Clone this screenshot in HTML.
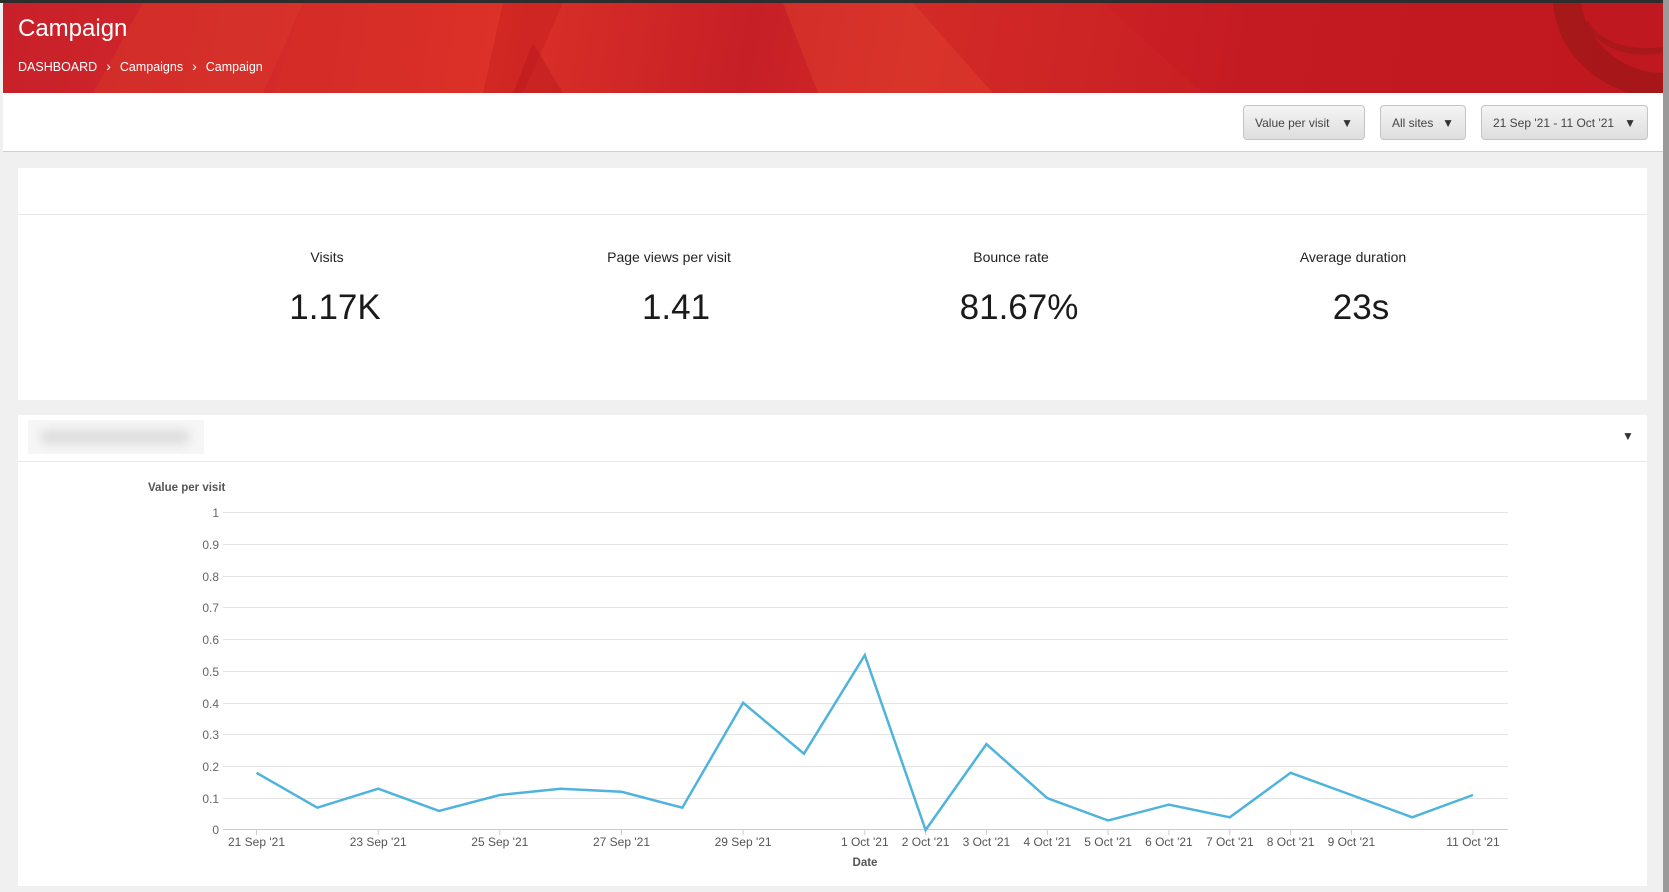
<!DOCTYPE html>
<html><head><meta charset="utf-8">
<style>
*{box-sizing:border-box;margin:0;padding:0}
html,body{width:1669px;height:892px;overflow:hidden;background:#f0f0f0;font-family:"Liberation Sans",sans-serif;position:relative}
.topbar{position:absolute;left:0;top:0;width:1669px;height:3px;background:#2d2d2d}
.lefte{position:absolute;left:0;top:0;width:3px;height:892px;background:#8a8a8a}
.scroll{position:absolute;left:1663px;top:0;width:6px;height:892px;background:#9a9a9a}
.header{position:absolute;left:3px;top:3px;width:1660px;height:90px;background:linear-gradient(100deg,#c8202a 0%,#dc3128 30%,#c61f26 45%,#d42a27 55%,#c41a22 75%,#c01820 100%);overflow:hidden}
.title{position:absolute;left:15px;top:12px;color:#fff;font-size:24px}
.bc{position:absolute;left:15px;top:55px;color:#fff;font-size:12.5px}
.bc span{margin:0 9px;font-size:14px}
.toolbar{position:absolute;left:3px;top:93px;width:1660px;height:59px;background:#fff;border-bottom:1px solid #d0d0d0}
.btn{position:absolute;top:12px;height:35px;border:1px solid #c4c4c4;border-radius:4px;background:linear-gradient(#f4f4f4,#dedede);color:#444;font-size:12px;line-height:35px;padding-left:11px}
.btn i{position:absolute;right:11px;top:0;font-style:normal;font-size:12px;color:#333}
.card{position:absolute;left:18px;width:1629px;background:#fff}
.lab{position:absolute;top:249px;font-size:14px;color:#222;transform:translateX(-50%);white-space:nowrap}
.val{position:absolute;top:288px;font-size:35px;color:#1a1a1a;transform:translateX(-50%);white-space:nowrap}
</style></head><body>
<div class="topbar"></div>
<div class="header">
<svg width="1660" height="90" style="position:absolute;left:0;top:0">
<polygon points="140,0 300,0 260,90 90,90" fill="#e0402f" opacity=".35"/>
<polygon points="300,0 420,0 400,90 270,90" fill="#d63028" opacity=".4"/>
<polygon points="500,0 560,0 520,90 480,90" fill="#b8141c" opacity=".3"/>
<polygon points="530,40 560,90 510,90" fill="#b01018" opacity=".35"/>
<polygon points="780,0 910,0 990,90 815,90" fill="#e0402f" opacity=".45"/>
<polygon points="910,0 1100,0 1200,90 990,90" fill="#d02a28" opacity=".25"/>
<path d="M1550 0 C1555 60 1610 95 1660 95 L1660 70 C1625 70 1585 45 1578 0Z" fill="#a01818" opacity=".8"/>
<path d="M1580 20 C1600 50 1630 55 1660 50 L1660 44 C1630 48 1600 42 1585 18Z" fill="#a01818" opacity=".7"/>
</svg>
<div class="title">Campaign</div>
<div class="bc">DASHBOARD<span>›</span>Campaigns<span>›</span>Campaign</div>
</div>
<div class="scroll"></div>
<div class="toolbar">
<div class="btn" style="left:1240px;width:122px">Value per visit<i>▼</i></div>
<div class="btn" style="left:1377px;width:86px">All sites<i>▼</i></div>
<div class="btn" style="left:1478px;width:167px">21 Sep '21 - 11 Oct '21<i>▼</i></div>
</div>
<div class="card" style="top:168px;height:232px"><div style="position:absolute;left:0;top:46px;width:100%;height:1px;background:#e8e8e8"></div></div>
<div class="lab" style="left:327px">Visits</div>
<div class="val" style="left:335px">1.17K</div>
<div class="lab" style="left:669px">Page views per visit</div>
<div class="val" style="left:676px">1.41</div>
<div class="lab" style="left:1011px">Bounce rate</div>
<div class="val" style="left:1019px">81.67%</div>
<div class="lab" style="left:1353px">Average duration</div>
<div class="val" style="left:1361px">23s</div>
<div class="card" style="top:415px;height:471px">
<div style="position:absolute;left:10px;top:5px;width:176px;height:34px;background:#f6f6f6"><div style="position:absolute;left:12px;top:10px;width:150px;height:14px;background:#dcdcdc;filter:blur(5px);border-radius:7px"></div></div>
<div style="position:absolute;left:0;top:46px;width:100%;height:1px;background:#e8e8e8"></div>
<div style="position:absolute;left:1604px;top:14px;font-size:12px;color:#333">▼</div>
</div>
<svg width="1669" height="892" style="position:absolute;left:0;top:0" font-family="Liberation Sans, sans-serif">
<text x="148" y="491" font-size="11.5" font-weight="bold" fill="#555">Value per visit</text>
<g stroke="#e3e3e3" stroke-width="1">
<line x1="223" y1="512.5" x2="1508" y2="512.5"/><line x1="223" y1="544.5" x2="1508" y2="544.5"/><line x1="223" y1="576.5" x2="1508" y2="576.5"/><line x1="223" y1="607.5" x2="1508" y2="607.5"/><line x1="223" y1="639.5" x2="1508" y2="639.5"/><line x1="223" y1="671.5" x2="1508" y2="671.5"/><line x1="223" y1="703.5" x2="1508" y2="703.5"/><line x1="223" y1="734.5" x2="1508" y2="734.5"/><line x1="223" y1="766.5" x2="1508" y2="766.5"/><line x1="223" y1="798.5" x2="1508" y2="798.5"/>
</g>
<line x1="223" y1="829.5" x2="1508" y2="829.5" stroke="#ccc"/>
<g font-size="12" fill="#666" text-anchor="end">
<text x="219" y="517">1</text><text x="219" y="549">0.9</text><text x="219" y="581">0.8</text><text x="219" y="612">0.7</text><text x="219" y="644">0.6</text><text x="219" y="676">0.5</text><text x="219" y="708">0.4</text><text x="219" y="739">0.3</text><text x="219" y="771">0.2</text><text x="219" y="803">0.1</text><text x="219" y="834">0</text>
</g>
<g stroke="#ccc">
<line x1="256.5" y1="830" x2="256.5" y2="835"/><line x1="378.2" y1="830" x2="378.2" y2="835"/><line x1="499.8" y1="830" x2="499.8" y2="835"/><line x1="621.5" y1="830" x2="621.5" y2="835"/><line x1="743.1" y1="830" x2="743.1" y2="835"/><line x1="864.8" y1="830" x2="864.8" y2="835"/><line x1="925.6" y1="830" x2="925.6" y2="835"/><line x1="986.4" y1="830" x2="986.4" y2="835"/><line x1="1047.3" y1="830" x2="1047.3" y2="835"/><line x1="1108.1" y1="830" x2="1108.1" y2="835"/><line x1="1168.9" y1="830" x2="1168.9" y2="835"/><line x1="1229.8" y1="830" x2="1229.8" y2="835"/><line x1="1290.6" y1="830" x2="1290.6" y2="835"/><line x1="1351.4" y1="830" x2="1351.4" y2="835"/><line x1="1473" y1="830" x2="1473" y2="835"/>
</g>
<g font-size="12" fill="#555" text-anchor="middle">
<text x="256.5" y="846">21 Sep '21</text><text x="378.2" y="846">23 Sep '21</text><text x="499.8" y="846">25 Sep '21</text><text x="621.5" y="846">27 Sep '21</text><text x="743.1" y="846">29 Sep '21</text><text x="864.8" y="846">1 Oct '21</text><text x="925.6" y="846">2 Oct '21</text><text x="986.4" y="846">3 Oct '21</text><text x="1047.3" y="846">4 Oct '21</text><text x="1108.1" y="846">5 Oct '21</text><text x="1168.9" y="846">6 Oct '21</text><text x="1229.8" y="846">7 Oct '21</text><text x="1290.6" y="846">8 Oct '21</text><text x="1351.4" y="846">9 Oct '21</text><text x="1473" y="846">11 Oct '21</text>
</g>
<text x="865" y="866" font-size="11.5" font-weight="bold" fill="#555" text-anchor="middle">Date</text>
<polyline fill="none" stroke="#4fb3dc" stroke-width="2.5" stroke-linejoin="miter" points="256.5,772.8 317.3,807.7 378.2,788.7 439,810.9 499.8,795 560.6,788.7 621.5,791.8 682.3,807.7 743.1,702.8 804,753.7 864.8,655.1 925.6,830 986.4,744.1 1047.3,798.2 1108.1,820.5 1168.9,804.6 1229.8,817.3 1290.6,772.8 1351.4,795 1412.2,817.3 1473,795"/>
</svg>
</body></html>
